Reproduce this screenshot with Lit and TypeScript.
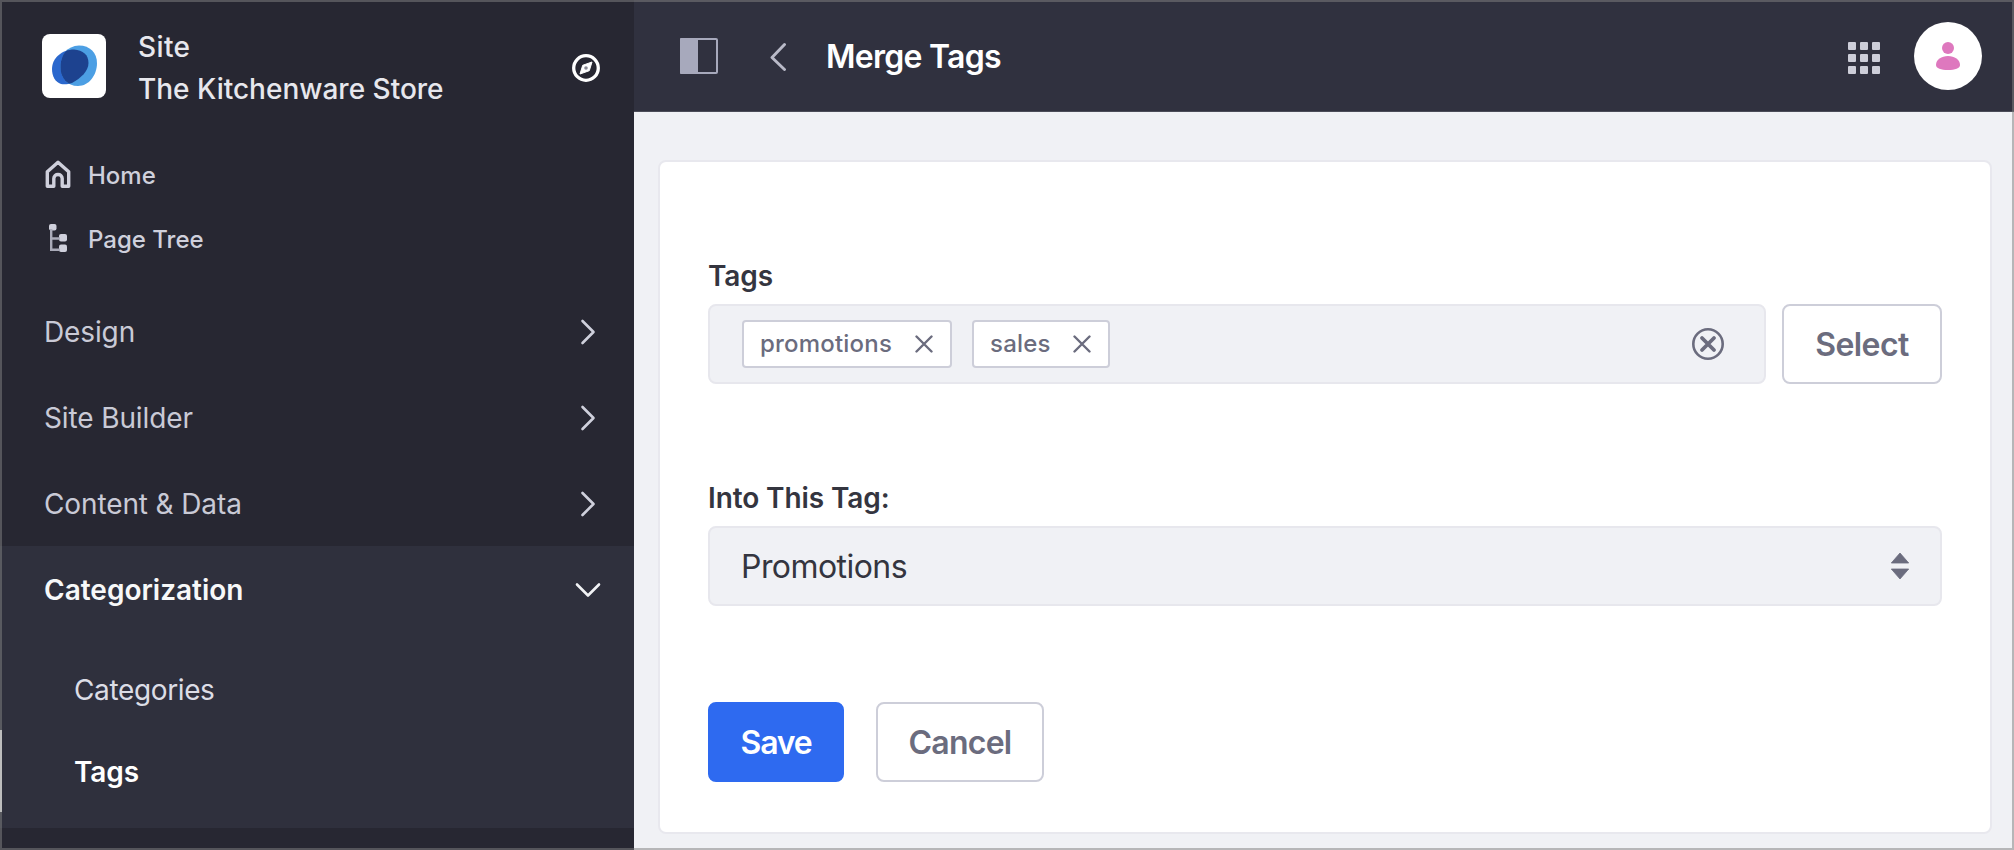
import { LitElement, html, css, svg } from "lit";
import { customElement } from "lit/decorators.js";
import { classMap } from "lit/directives/class-map.js";

const logo = html`<svg width="64" height="64" viewBox="0 0 64 64">
  <defs><clipPath id="front"><path d="M32 15.500C41 16 46.500 21 46.500 29C46.500 37 39 44 30 49C26 50.500 22 50.500 19 50C13 48 10 42 10 35C10 24 20 15.500 32 15.500Z" /></clipPath></defs>
  <path fill="#2a67cd" d="M32 15.500C41 16 46.500 21 46.500 29C46.500 37 39 44 30 49C26 50.500 22 50.500 19 50C13 48 10 42 10 35C10 24 20 15.500 32 15.500Z" />
  <path fill="#4c9fe4" d="M37 11.500C48 11.500 55 19 55 29C55 41 47 52 36 52C25 52 18.500 44 18.500 33C18.500 21 25 12 37 11.500Z" />
  <path fill="#1d428f" clip-path="url(#front)" d="M37 11.500C48 11.500 55 19 55 29C55 41 47 52 36 52C25 52 18.500 44 18.500 33C18.500 21 25 12 37 11.500Z" />
</svg>`;

const compass = html`<svg width="28" height="28" viewBox="0 0 28 28" fill="none" stroke="#fff">
  <circle cx="14" cy="14" r="12.300" stroke-width="3.300" />
  <path fill="#fff" stroke="#fff" stroke-width="1" stroke-linejoin="round" d="M20 8L17.300 16.700L8 20L10.700 11.300Z" />
  <circle cx="14" cy="14" r="1.800" fill="#8a8a95" stroke="none" />
</svg>`;

const home = html`<svg width="26" height="28" viewBox="0 0 26 28" fill="none" stroke="#cfd0dc" stroke-width="3.400" stroke-linejoin="round">
  <path d="M2.300 26.200V11.800L13 2.300L23.700 11.800V26.200H17.200V18.500C17.200 13.200 8.800 13.200 8.800 18.500V26.200Z" />
</svg>`;

const tree = html`<svg width="26" height="28" viewBox="0 0 26 28" fill="#cfd0dc">
  <rect x="4" y="0" width="7.500" height="6.500" rx="2" />
  <rect x="14" y="10" width="8" height="7.500" rx="2" />
  <rect x="14" y="20.500" width="8" height="7.500" rx="2" />
  <path d="M6.200 5V25.700H15M6.200 14.500H15" fill="none" stroke="#a9aab8" stroke-width="2.400" />
</svg>`;

const chevron = (open: boolean) => html`<svg width="28" height="28" viewBox="0 0 28 28" fill="none"
  stroke=${open ? "#f1f2f5" : "#cfd0dc"} stroke-width="2.600" stroke-linecap="round" stroke-linejoin="round">
  ${open ? svg`<path d="M3 8.500L14 19.500L25 8.500" />` : svg`<path d="M8.500 3L19.500 14L8.500 25" />`}
</svg>`;

const cross = html`<svg width="18" height="18" viewBox="0 0 18 18" fill="none" stroke="#6b6c7e" stroke-width="2.400" stroke-linecap="round">
  <path d="M1.500 1.500L16.500 16.500M16.500 1.500L1.500 16.500" />
</svg>`;

const clear = html`<svg width="32" height="32" viewBox="0 0 32 32" fill="none" stroke="#6b6c7e">
  <circle cx="16" cy="16" r="14.700" stroke-width="2.600" />
  <path d="M10 10L22 22M22 10L10 22" stroke-width="3.800" stroke-linecap="round" />
</svg>`;

@customElement("site-sidebar")
class SiteSidebar extends LitElement {
  static styles = css`
    :host { display: block; width: 634px; flex: none; background: #272732; color: #c9cad6; overflow: hidden; }
    svg { display: block; flex: none; }
    .head { display: flex; padding: 25px 34px 0 42px; height: 118px; box-sizing: border-box; }
    .logo { margin-top: 9px; width: 64px; height: 64px; border-radius: 8px; background: #fff; }
    .names { flex: 1; margin: 1px 0 0 32px; font-size: 28px; font-weight: 500; line-height: 42px; color: #e7e7ed; }
    .kind { letter-spacing: 0.400px; }
    .compass { margin-top: 29px; }
    .links { padding-top: 24px; }
    .link { height: 64px; display: flex; align-items: center; gap: 17px; padding-left: 45px; font-size: 24px; font-weight: 550; color: #cfd0dc; }
    .link span { padding-top: 2px; }
    .nav { padding-top: 18px; }
    .row { height: 86px; display: flex; align-items: center; justify-content: space-between; padding: 1px 32px 0 44px; box-sizing: border-box; font-size: 28px; letter-spacing: -0.120px; }
    .group { height: 282px; background: #2f303d; }
    .open { color: #f7f8f9; font-weight: 600; letter-spacing: 0; }
    .sub { padding-top: 16px; }
    .item { height: 82px; display: flex; align-items: center; padding: 1px 0 0 74px; box-sizing: border-box; font-size: 28px; letter-spacing: -0.370px; color: #dcdde6; }
    .current { font-weight: 600; color: #fff; letter-spacing: -0.100px; box-shadow: inset 2px 0 #fff; }
  `;
  render() {
    return html`
      <div class="head">
        <div class="logo">${logo}</div>
        <div class="names"><div class="kind">Site</div><div>The Kitchenware Store</div></div>
        <div class="compass">${compass}</div>
      </div>
      <div class="links">
        <div class="link">${home}<span>Home</span></div>
        <div class="link">${tree}<span>Page Tree</span></div>
      </div>
      <div class="nav">
        ${["Design", "Site Builder", "Content & Data"].map((t) => html`<div class="row"><span>${t}</span>${chevron(false)}</div>`)}
        <div class="group">
          <div class="row open"><span>Categorization</span>${chevron(true)}</div>
          <div class="sub">
            ${["Categories", "Tags"].map((t) => html`<div class=${classMap({ item: true, current: t === "Tags" })}>${t}</div>`)}
          </div>
        </div>
      </div>`;
  }
}

@customElement("top-bar")
class TopBar extends LitElement {
  static styles = css`
    :host { display: flex; height: 112px; box-sizing: border-box; align-items: center; padding: 0 32px 0 46px; background: #30313f; border-bottom: 1px solid #4b4c58; }
    svg { display: block; }
    .back { margin-left: 51px; }
    .title { flex: 1; margin: 1px 0 0 39px; font-size: 32px; font-weight: 600; letter-spacing: -0.730px; color: #fff; }
    .grid { display: grid; grid-template-columns: repeat(3, 8px); gap: 4px; margin: 4px 34px 0 0; }
    .dot { height: 8px; background: #cdced9; border-radius: 1px; }
    .avatar { width: 68px; height: 68px; border-radius: 50%; background: #fff; display: grid; place-items: center; }
  `;
  render() {
    return html`
      <svg width="38" height="36" viewBox="0 0 38 36"><rect x="1" y="1" width="36" height="34" rx="1" fill="none" stroke="#a7a9bc" stroke-width="2" /><rect width="18" height="36" rx="1" fill="#a7a9bc" /></svg>
      <svg class="back" width="18" height="30" viewBox="0 0 18 30" fill="none" stroke="#b9bac8" stroke-width="2.900" stroke-linecap="round" stroke-linejoin="round"><path d="M15.500 4L3 17L15.500 29" transform="translate(0 -0.500)" /></svg>
      <div class="title">Merge Tags</div>
      <div class="grid">${Array.from({ length: 9 }, () => html`<div class="dot"></div>`)}</div>
      <div class="avatar"><svg width="24" height="28" viewBox="0 0 24 28" fill="#de78be"><circle cx="12" cy="6" r="6" /><path d="M12 14C18.500 14 24 17.500 24 23C24 26.500 19 28 12 28S0 26.500 0 23C0 17.500 5.500 14 12 14Z" /></svg></div>`;
  }
}

@customElement("merge-form")
class MergeForm extends LitElement {
  static styles = css`
    :host { display: block; box-sizing: border-box; margin: 48px 22px 0 24px; height: 674px; padding: 96px 48px 0; background: #fff; border: 2px solid #e8e8ee; border-radius: 8px; color: #34353f; }
    svg { display: block; }
    .label { height: 46px; line-height: 37px; font-size: 28px; font-weight: 600; letter-spacing: -0.100px; }
    .line { display: flex; gap: 16px; }
    .field { flex: 1; height: 80px; box-sizing: border-box; display: flex; align-items: center; border: 2px solid #e7e7ed; border-radius: 8px; background: #f0f1f5; padding: 0 40px 0 32px; }
    .chip { display: flex; align-items: center; justify-content: space-between; box-sizing: border-box; height: 48px; border: 2px solid #cdced9; border-radius: 4px; background: #fff; padding: 0 17px 0 16px; margin-right: 20px; font-size: 24px; font-weight: 550; letter-spacing: 0.200px; color: #6b6c7e; }
    .promotions { width: 210px; }
    .sales { width: 138px; }
    .chip span { margin-top: -1px; }
    .clear { margin-left: auto; }
    .btn { box-sizing: border-box; height: 80px; display: flex; align-items: center; justify-content: center; border: 2px solid #cdced9; border-radius: 8px; background: #fff; font-family: inherit; font-size: 32px; font-weight: 600; letter-spacing: -0.600px; color: #6b6c7e; padding: 0; }
    .select { width: 160px; }
    .into { margin-top: 96px; }
    .value { padding-left: 0; padding-right: 30px; justify-content: space-between; font-size: 32px; letter-spacing: -0.550px; }
    .value span { padding-left: 31px; }
    .actions { display: flex; gap: 32px; margin-top: 96px; }
    .save { width: 136px; background: #2e6af0; border-color: #2e6af0; color: #fff; letter-spacing: -1.200px; }
    .cancel { width: 168px; letter-spacing: -0.760px; }
  `;
  render() {
    return html`
      <div class="label">Tags</div>
      <div class="line">
        <div class="field">
          ${["promotions", "sales"].map((t) => html`<div class=${classMap({ chip: true, [t]: true })}><span>${t}</span>${cross}</div>`)}
          <div class="clear">${clear}</div>
        </div>
        <button class="btn select">Select</button>
      </div>
      <div class="label into">Into This Tag:</div>
      <div class="field value"><span>Promotions</span>
        <svg width="20" height="28" viewBox="0 0 20 28" fill="#6b6c7e"><path d="M1.300 11L10 1L18.700 11ZM1.300 17L10 27L18.700 17Z" stroke="#6b6c7e" stroke-width=".8" stroke-linejoin="round" /></svg>
      </div>
      <div class="actions"><button class="btn save">Save</button><button class="btn cancel">Cancel</button></div>`;
  }
}

@customElement("app-root")
class AppRoot extends LitElement {
  static styles = css`
    :host { display: flex; position: relative; width: 100%; height: 850px; overflow: hidden; font-family: Inter, "Liberation Sans", sans-serif; background: #f0f1f5; }
    .main { flex: 1; min-width: 0; }
    .frame { position: absolute; inset: 0; border: 2px solid rgba(129, 129, 129, 0.520); pointer-events: none; }
  `;
  render() {
    return html`<site-sidebar></site-sidebar>
      <div class="main"><top-bar></top-bar><merge-form></merge-form></div>
      <div class="frame"></div>`;
  }
}
